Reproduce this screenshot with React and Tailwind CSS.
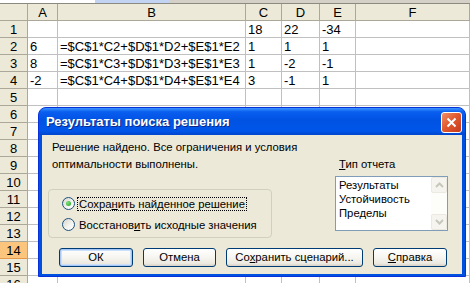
import React from "react";

const cols = ["A", "B", "C", "D", "E", "F"];

const rows = [
	["", "", "18", "22", "-34", ""],
	["6", "=$C$1*C2+$D$1*D2+$E$1*E2", "1", "1", "1", ""],
	["8", "=$C$1*C3+$D$1*D3+$E$1*E3", "1", "-2", "-1", ""],
	["-2", "=$C$1*C4+$D$1*D4+$E$1*E4", "3", "-1", "1", ""],
];

function Sheet() {
	const allRows = [];
	for (let i = 0; i < 17; i++) allRows.push(rows[i] || ["", "", "", "", "", ""]);

	return (
		<div className="grid grid-cols-[28px_30px_188px_36px_38px_36px_1fr] border-t border-[#8a8a80]">
			<div className="h-[17px] bg-[#ece9d8] border-r border-b border-[#aca899]" />
			{cols.map((c) => (
				<div
					key={c}
					className="h-[17px] bg-[#ece9d8] border-r border-b border-[#aca899] flex items-center justify-center text-[13px] leading-none"
				>
					{c}
				</div>
			))}
			{allRows.map((r, i) => (
				<React.Fragment key={i}>
					<div
						className={`h-[17px] border-r border-b flex items-center justify-center text-[13px] leading-none ${
							i === 13
								? "bg-[#fcc57e] border-[#e49a4a]"
								: "bg-[#ece9d8] border-[#aca899]"
						}`}
					>
						{i + 1}
					</div>
					{r.map((v, j) => (
						<div
							key={j}
							className="h-[17px] border-r border-b border-[#c0c0c0] bg-white flex items-center pl-[2px] text-[13px] leading-none whitespace-nowrap overflow-hidden"
						>
							{v}
						</div>
					))}
				</React.Fragment>
			))}
		</div>
	);
}

function Radio({ checked }) {
	return (
		<span className="w-[13px] h-[13px] rounded-full border border-[#1c5180] bg-[linear-gradient(135deg,#d6d5cd_0%,#f3f3ef_55%,#ffffff_100%)] flex items-center justify-center shrink-0">
			{checked && (
				<span className="w-[5px] h-[5px] rounded-full bg-[radial-gradient(circle_at_35%_35%,#7ee07a,#21a121)]" />
			)}
		</span>
	);
}

function XpButton({ children, width, isDefault }) {
	return (
		<button
			className={`${width} h-[19px] rounded-[3px] border border-[#003c74] bg-[linear-gradient(180deg,#ffffff_0%,#f6f5f0_50%,#ece9e0_85%,#d6d0c5_100%)] text-[11.3px] leading-none flex items-center justify-center ${
				isDefault ? "shadow-[inset_0_0_0_1px_#a8c6f5,inset_0_0_0_2px_#cbe0fb]" : ""
			}`}
		>
			{children}
		</button>
	);
}

function Chevron({ up }) {
	return (
		<svg width="9" height="6" viewBox="0 0 9 6">
			<path
				d={up ? "M1 5 L4.5 1.5 L8 5" : "M1 1 L4.5 4.5 L8 1"}
				fill="none"
				stroke="#c9c7bc"
				strokeWidth="2"
			/>
		</svg>
	);
}

function Dialog() {
	return (
		<div className="absolute left-[38px] top-[107px] w-[428px] h-[170px] flex flex-col rounded-t-[8px] border border-[#0831d9] bg-[#0050e0] px-[3px] pb-[2px]">
			<div className="h-[27px] -mx-[3px] rounded-t-[7px] bg-[linear-gradient(180deg,#3d95ff_0%,#0a5ff0_14%,#0052e2_45%,#0056ea_85%,#0046cc_100%)] flex items-start pl-[7px] pr-[3px]">
				<span className="mt-[6px] text-white font-bold text-[13px] leading-[16px] [text-shadow:1px_1px_0_#0a2a8a]">
					Результаты поиска решения
				</span>
				<div className="ml-auto mt-[4px] w-[21px] h-[21px] rounded-[3px] border border-white bg-[linear-gradient(135deg,#f0906a_0%,#e25a2e_45%,#c4391e_100%)] flex items-center justify-center">
					<svg width="11" height="11" viewBox="0 0 11 11">
						<path d="M1.5 1.5 L9.5 9.5 M9.5 1.5 L1.5 9.5" stroke="white" strokeWidth="2" />
					</svg>
				</div>
			</div>
			<div className="flex-1 bg-[#ece9d8] px-[6px] pt-[4px] flex flex-col text-[11.3px]">
				<div className="flex">
					<div className="flex flex-col w-[224px]">
						<p className="ml-[4px] leading-[17px] whitespace-nowrap">
							Решение найдено. Все ограничения и условия
							<br />
							оптимальности выполнены.
						</p>
						<div className="mt-[16px] h-[49px] rounded-[4px] border border-[#d0d0bf] flex flex-col pl-[13px] pt-[7px] gap-[8px]">
							<div className="flex items-center h-[13px]">
								<Radio checked />
								<span className="ml-[2px] px-[1px] border border-dotted border-black leading-[12px] whitespace-nowrap">
									Сохра<u>н</u>ить найденное решение
								</span>
							</div>
							<div className="flex items-center h-[13px]">
								<Radio />
								<span className="ml-[3px] px-[1px] leading-[12px] whitespace-nowrap">
									Восстанов<u>и</u>ть исходные значения
								</span>
							</div>
						</div>
					</div>
					<div className="ml-[63px] pt-[17px] flex flex-col">
						<span className="ml-[4px] leading-[17px]">
							<u>Т</u>ип отчета
						</span>
						<div className="mt-[3px] w-[113px] h-[55px] border border-[#7f9db9] bg-white flex">
							<div className="flex-1 pl-[3px] pt-[1px] leading-[14px]">
								<div>Результаты</div>
								<div>Устойчивость</div>
								<div>Пределы</div>
							</div>
							<div className="w-[16px] flex flex-col justify-between bg-[#fdfdfa]">
								<div className="h-[16px] rounded-[2px] border border-[#ece9e0] bg-[#f5f4ef] flex items-center justify-center">
									<Chevron up />
								</div>
								<div className="h-[16px] rounded-[2px] border border-[#ece9e0] bg-[#f5f4ef] flex items-center justify-center">
									<Chevron />
								</div>
							</div>
						</div>
					</div>
				</div>
				<div className="mt-[10px] ml-[11px] flex gap-[10px]">
					<XpButton width="w-[74px]" isDefault>
						ОК
					</XpButton>
					<XpButton width="w-[73px]">Отмена</XpButton>
					<XpButton width="w-[137px]">
						Со<u>х</u>ранить сценарий...
					</XpButton>
					<XpButton width="w-[74px]">
						<u>С</u>правка
					</XpButton>
				</div>
			</div>
		</div>
	);
}

export default function App() {
	return (
		<div className="relative w-[470px] h-[283px] overflow-hidden bg-white text-black font-['Liberation_Sans',Arial,sans-serif]">
			<div className="flex h-[3px]">
				<div className="w-[95px] bg-white" />
				<div className="w-[75px] bg-[#c3d4f2]" />
				<div className="flex-1 bg-[#d4d0c8]" />
			</div>
			<Sheet />
			<Dialog />
		</div>
	);
}
